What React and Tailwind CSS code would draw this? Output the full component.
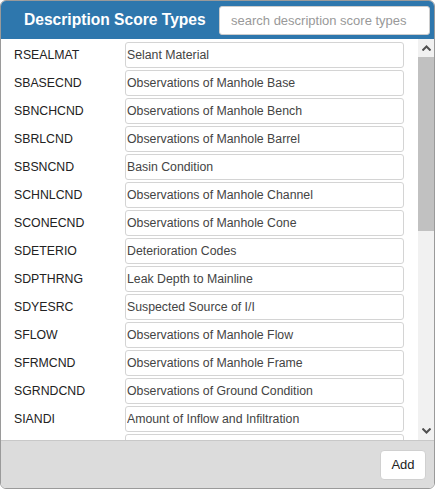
import { useRef, useState, useEffect } from 'react'

const rows = [
  ['RSEALMAT', 'Selant Material'],
  ['SBASECND', 'Observations of Manhole Base'],
  ['SBNCHCND', 'Observations of Manhole Bench'],
  ['SBRLCND', 'Observations of Manhole Barrel'],
  ['SBSNCND', 'Basin Condition'],
  ['SCHNLCND', 'Observations of Manhole Channel'],
  ['SCONECND', 'Observations of Manhole Cone'],
  ['SDETERIO', 'Deterioration Codes'],
  ['SDPTHRNG', 'Leak Depth to Mainline'],
  ['SDYESRC', 'Suspected Source of I/I'],
  ['SFLOW', 'Observations of Manhole Flow'],
  ['SFRMCND', 'Observations of Manhole Frame'],
  ['SGRNDCND', 'Observations of Ground Condition'],
  ['SIANDI', 'Amount of Inflow and Infiltration'],
  ['SINVCND', 'Observations of Manhole Invert'],
  ['SJNTCND', 'Observations of Manhole Joints'],
  ['SLDCND', 'Observations of Manhole Lid'],
  ['SLEAK', 'Leak Type'],
  ['SLNRCND', 'Observations of Manhole Liner'],
  ['SMATL', 'Manhole Material'],
  ['SPIPECND', 'Observations of Pipe Connection'],
  ['SRINGCND', 'Observations of Adjusting Rings'],
  ['SROOTS', 'Root Intrusion'],
  ['SSEALCND', 'Observations of Frame Seal'],
  ['SSHAPE', 'Manhole Shape'],
  ['SSTEPCND', 'Observations of Manhole Steps'],
  ['SSURFACE', 'Surface Type'],
  ['STRFFC', 'Traffic Conditions'],
  ['SWALLCND', 'Observations of Manhole Wall'],
  ['SWTRTBL', 'Water Table'],
]

function Chevron({ up }) {
  return (
    <svg width="9" height="6" viewBox="0 0 9 6" className="block">
      <path
        d={up ? 'M0.5 5.5 L4.5 1.5 L8.5 5.5' : 'M0.5 0.5 L4.5 4.5 L8.5 0.5'}
        fill="none"
        stroke="#505050"
        strokeWidth="2"
      />
    </svg>
  )
}

export default function App() {
  const [search, setSearch] = useState('')
  const [items, setItems] = useState(rows)
  const listRef = useRef(null)
  const [bar, setBar] = useState({ top: 0, size: 170 })

  const update = () => {
    const el = listRef.current
    if (!el) return
    const track = el.clientHeight - 36
    const size = Math.max(20, Math.round((el.clientHeight / el.scrollHeight) * track))
    const max = el.scrollHeight - el.clientHeight
    const top = max > 0 ? Math.round((el.scrollTop / max) * (track - size)) : 0
    setBar({ top, size })
  }

  useEffect(update, [items])

  const filtered = items.filter(([c, d]) =>
    (c + ' ' + d).toLowerCase().includes(search.toLowerCase())
  )

  return (
    <div className="w-[435px] h-[489px] flex flex-col overflow-hidden rounded-[6px] border border-[#9a9a9a] bg-white font-['Liberation_Sans',Arial,sans-serif]">
      <div className="h-[38px] shrink-0 flex items-center justify-between bg-[#2e77ad] pl-[23px] pr-[4px]">
        <h1 className="text-[15.6px] font-bold text-white">Description Score Types</h1>
        <input
          value={search}
          onChange={(e) => setSearch(e.target.value)}
          placeholder="search description score types"
          className="w-[211px] h-[29px] rounded-[3px] border border-[#cccccc] bg-white px-[11px] text-[13px] text-[#555] placeholder:text-[#999] outline-none"
        />
      </div>

      <div className="flex-1 min-h-0 flex border-b border-[#c8c8c8]">
        <div
          ref={listRef}
          onScroll={update}
          className="flex-1 overflow-y-scroll pt-[3px] [scrollbar-width:none] [&::-webkit-scrollbar]:hidden"
        >
          {filtered.map(([code, desc]) => (
            <div key={code} className="h-[28px] flex items-start">
              <span className="w-[124px] shrink-0 pl-[13px] h-[26px] flex items-center text-[12.3px] text-[#222]">{code}</span>
              <input
                value={desc}
                onChange={(e) =>
                  setItems(items.map((r) => (r[0] === code ? [code, e.target.value] : r)))
                }
                className="w-[279px] h-[26px] rounded-[3px] border border-[#d4d4d4] bg-white px-[1px] text-[12.3px] text-[#444] outline-none"
              />
            </div>
          ))}
        </div>
        <div className="w-[16px] shrink-0 flex flex-col bg-[#f1f1f1]">
          <div className="h-[18px] shrink-0 flex items-center justify-center">
            <Chevron up />
          </div>
          <div className="flex-1 relative">
            <div
              className="absolute left-0 right-0 bg-[#c1c1c1]"
              style={{ top: bar.top, height: bar.size }}
            />
          </div>
          <div className="h-[18px] shrink-0 flex items-center justify-center">
            <Chevron />
          </div>
        </div>
      </div>

      <div className="h-[47px] shrink-0 flex items-center justify-end bg-[#dcdcdc] pr-[8px]">
        <button className="h-[30px] w-[46px] rounded-[4px] border border-[#d0d0d0] bg-white text-[13px] text-[#222]">Add</button>
      </div>
    </div>
  )
}
